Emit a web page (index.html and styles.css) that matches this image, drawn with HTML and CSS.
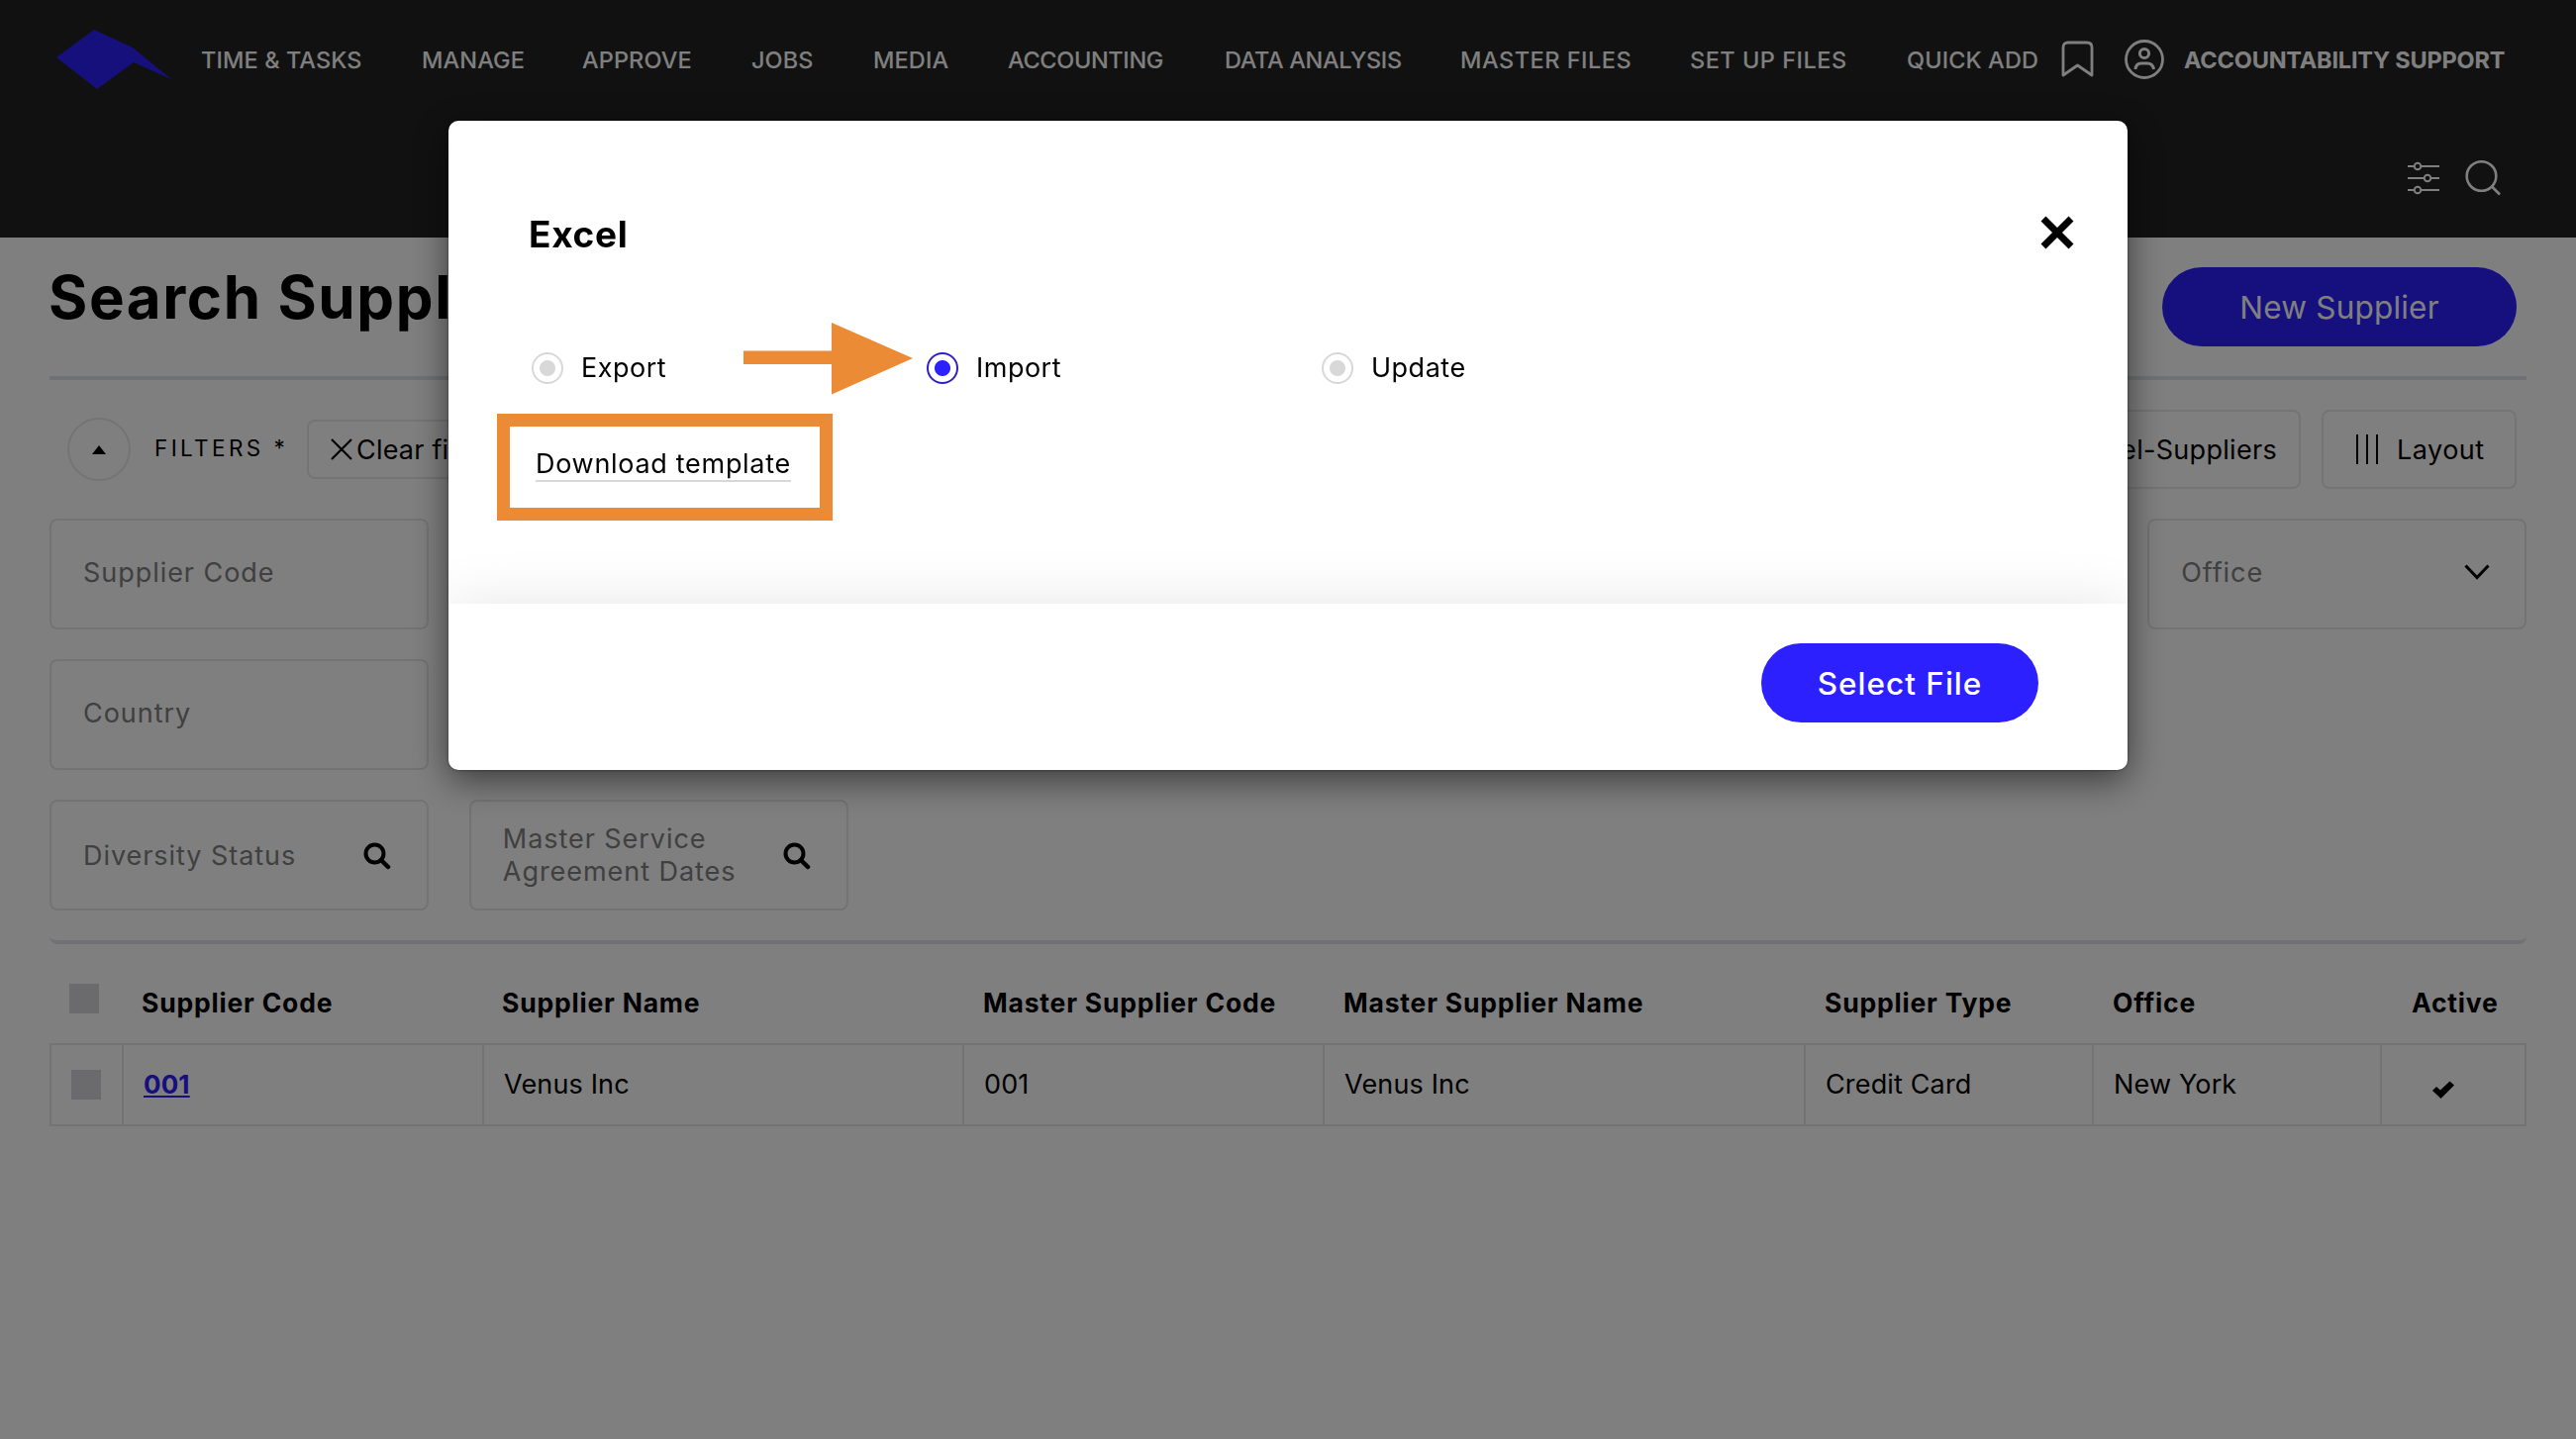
FILE: index.html
```html
<!DOCTYPE html>
<html lang="en">
<head>
    <meta charset="UTF-8" />
    <meta name="viewport" content="width=device-width, initial-scale=1.0"/>
    <title>Search Suppliers</title>
    <link rel="stylesheet" href="styles.css">
</head>
<body>
    <header class="header">
        <div class="topbar">
            <svg class="logo" width="118" height="64" viewBox="0 0 118 64">
                <path d="M0 30 L38 2 L77 20 L116 52 L78 35 L41 62 Z" fill="#2d20fa"/>
            </svg>
            <nav class="nav">
                <a>TIME &amp; TASKS</a>
                <a>MANAGE</a>
                <a>APPROVE</a>
                <a>JOBS</a>
                <a>MEDIA</a>
                <a class="tight">ACCOUNTING</a>
                <a class="tight">DATA ANALYSIS</a>
                <a class="wide">MASTER FILES</a>
                <a class="wide">SET UP FILES</a>
                <a>QUICK ADD</a>
            </nav>
            <svg class="bookmark" width="34" height="40" viewBox="0 0 34 40">
                <path d="M2 36 V8 Q2 3 7 3 H26 Q31 3 31 8 V36 L16.5 26 Z" fill="none" stroke="#fff" stroke-width="2.8" stroke-linejoin="round"/>
            </svg>
            <svg class="user-icon" width="42" height="42" viewBox="0 0 42 42" fill="none" stroke="#fff">
                <circle cx="21" cy="21" r="18.5" stroke-width="2.8"/>
                <circle cx="21" cy="15" r="4.6" stroke-width="3"/>
                <path d="M12 31 Q12.5 25 18 25 H24 Q29.5 25 30.5 31" stroke-width="3"/>
            </svg>
            <span class="user-name">ACCOUNTABILITY SUPPORT</span>
        </div>
        <div class="subbar">
            <svg width="34" height="36" viewBox="0 0 34 36" fill="none" stroke="#fff" stroke-width="2">
                <path d="M1 6 H8 M14 6 H33 M1 18 H18 M24 18 H33 M1 30 H8 M14 30 H33"/>
                <circle cx="11" cy="6" r="3.3"/>
                <circle cx="21" cy="18" r="3.3"/>
                <circle cx="11" cy="30" r="3.3"/>
            </svg>
            <svg width="38" height="38" viewBox="0 0 38 38" fill="none" stroke="#fff" stroke-width="2.6">
                <circle cx="17.5" cy="17" r="14.8"/>
                <path d="M28 27.5 L36 35.5"/>
            </svg>
        </div>
    </header>

    <main class="page">
        <div class="page-head">
            <h1>Search Suppliers</h1>
            <button class="btn btn-new">New Supplier</button>
        </div>

        <div class="toolbar">
            <span class="collapse">
                <svg width="14" height="9" viewBox="0 0 14 9"><path d="M7 0 L14 9 H0 Z"/></svg>
            </span>
            <span class="filters-label">FILTERS *</span>
            <button class="tool clear">
                <svg width="22" height="22" viewBox="0 0 22 22"><path d="M1 1 L21 21 M21 1 L1 21" stroke="#000" stroke-width="2.2"/></svg>
                Clear filters
            </button>
            <button class="tool excel">Excel-Suppliers</button>
            <button class="tool layout">
                <svg width="24" height="30" viewBox="0 0 24 30"><path d="M2 0 V30 M12 0 V30 M22 0 V30" stroke="#000" stroke-width="2"/></svg>
                Layout
            </button>
        </div>

        <div class="filters">
            <div class="field">Supplier Code</div>
            <div class="field last-col">
                Office
                <svg width="26" height="16" viewBox="0 0 26 16"><path d="M1.5 1.5 L13 13.5 L24.5 1.5" fill="none" stroke="#000" stroke-width="3"/></svg>
            </div>
            <div class="field first-col">Country</div>
            <div class="field search-field first-col">
                Diversity Status
                <svg class="search" width="28" height="28" viewBox="0 0 28 28"><circle cx="11.5" cy="11.5" r="9" fill="none" stroke="#000" stroke-width="4"/><path d="M18 18 L25 25" stroke="#000" stroke-width="4.5" stroke-linecap="round"/></svg>
            </div>
            <div class="field search-field">
                Master Service<br>Agreement Dates
                <svg class="search" width="28" height="28" viewBox="0 0 28 28"><circle cx="11.5" cy="11.5" r="9" fill="none" stroke="#000" stroke-width="4"/><path d="M18 18 L25 25" stroke="#000" stroke-width="4.5" stroke-linecap="round"/></svg>
            </div>
        </div>

        <div class="grid grid-head">
            <div><span class="check"></span></div>
            <div>Supplier Code</div>
            <div>Supplier Name</div>
            <div>Master Supplier Code</div>
            <div>Master Supplier Name</div>
            <div>Supplier Type</div>
            <div>Office</div>
            <div class="active">Active</div>
        </div>
        <div class="grid grid-row">
            <div><span class="check"></span></div>
            <div><a class="code">001</a></div>
            <div>Venus Inc</div>
            <div>001</div>
            <div>Venus Inc</div>
            <div>Credit Card</div>
            <div>New York</div>
            <div class="active">
                <svg width="22" height="18" viewBox="0 0 22 18"><path d="M0 10 L4 6 L8 9.5 L17.5 0.5 L22 4.5 L8.5 18 Z"/></svg>
            </div>
        </div>
    </main>

    <div class="overlay">
        <div class="modal">
            <div class="modal-body">
                <div class="modal-head">
                    <h2>Excel</h2>
                    <svg width="36" height="36" viewBox="0 0 36 36"><path d="M4 4 L32 32 M32 4 L4 32" stroke="#000" stroke-width="7"/></svg>
                </div>
                <div class="options">
                    <label><span class="radio"></span>Export</label>
                    <label><span class="radio checked"></span>Import</label>
                    <label><span class="radio"></span>Update</label>
                </div>
                <div class="highlight"><a class="download">Download template</a></div>
                <svg class="arrow" width="172" height="74" viewBox="0 0 172 74">
                    <path d="M0 28.5 H89 V0 L171 36 L89 72.5 V42 H0 Z" fill="#ec8b35"/>
                </svg>
            </div>
            <div class="modal-foot">
                <button class="btn btn-select">Select File</button>
            </div>
        </div>
    </div>
</body>
</html>
```
FILE: styles.css
```css
* {
    box-sizing: border-box;
}
body {
    margin: 0;
    height: 1454px;
    overflow: hidden;
    background-color: #fff;
    color: #000;
    font-family: Inter, "Liberation Sans", sans-serif;
    font-size: 27px;
    letter-spacing: 0.75px;
}
svg {
    display: block;
    flex: none;
}
button {
    font: inherit;
    letter-spacing: inherit;
    color: #000;
    padding: 0;
}

/* header */
.header {
    height: 240px;
    background-color: #222;
    color: #fff;
}
.topbar {
    display: flex;
    align-items: center;
    height: 120px;
    padding-left: 57px;
    font-size: 23.5px;
    letter-spacing: 0.1px;
    white-space: nowrap;
}
.logo {
    margin-right: 28px;
}
.nav {
    display: grid;
    grid-template-columns: 223px 162px 171px 123px 136px 219px 238px 232px 219px 156px;
    font-weight: 500;
}
.nav .tight {
    letter-spacing: -0.35px;
}
.nav .wide {
    letter-spacing: 0.5px;
}
.bookmark {
    margin-right: 29px;
}
.user-icon {
    margin-right: 19px;
}
.user-name {
    font-weight: 700;
    letter-spacing: -0.2px;
}
.subbar {
    display: flex;
    justify-content: flex-end;
    align-items: center;
    gap: 24px;
    height: 120px;
    padding-right: 75px;
}

/* page */
.page {
    padding: 0 50px;
}
.page-head {
    display: flex;
    justify-content: space-between;
    height: 144px;
    padding: 30px 10px 0 0;
    border-bottom: 4px solid #dfe3e8;
}
h1 {
    margin: -1px 0 0 -1px;
    font-size: 60px;
    font-weight: 700;
    line-height: 62px;
    letter-spacing: 1.6px;
}
.btn {
    height: 80px;
    border: none;
    border-radius: 40px;
    background-color: #2d20ff;
    color: #fff;
    font-size: 31.5px;
    letter-spacing: 0.2px;
}
.btn-new {
    width: 358px;
}
.toolbar {
    display: flex;
    align-items: center;
    height: 140px;
    padding: 0 10px 0 18px;
}
.collapse {
    display: flex;
    align-items: center;
    justify-content: center;
    width: 64px;
    height: 64px;
    border: 2px solid #e8e8ea;
    border-radius: 50%;
}
.filters-label {
    width: 153px;
    margin: -4px 0 0 24px;
    font-size: 22.5px;
    letter-spacing: 3.4px;
}
.tool {
    display: flex;
    align-items: center;
    height: 80px;
    border: 2px solid #e8e8ea;
    border-radius: 8px;
    background: none;
    white-space: nowrap;
}
.clear {
    height: 60px;
    width: 230px;
    gap: 4px;
    padding-left: 22px;
    margin-left: 1px;
    letter-spacing: 0.2px;
}
.excel {
    width: 300px;
    margin-left: auto;
    padding-right: 22px;
    justify-content: flex-end;
    letter-spacing: 0.3px;
}
.layout {
    width: 197px;
    margin-left: 21px;
    padding-left: 32px;
    gap: 18px;
    letter-spacing: 0.5px;
}
.filters {
    display: grid;
    grid-template-columns: repeat(6, 1fr);
    gap: 30px 41px;
    height: 430px;
    border-bottom: 4px solid #dfe3e8;
    border-radius: 8px;
    align-content: start;
}
.field {
    position: relative;
    display: flex;
    align-items: center;
    height: 112px;
    padding: 0 35px 4px 32px;
    border: 2px solid #e6e6e8;
    border-radius: 8px;
    color: #808080;
    letter-spacing: 0.95px;
    line-height: 33px;
}
.field svg {
    margin-left: auto;
}
.search-field {
    padding-bottom: 0;
}
.field svg.search {
    position: absolute;
    right: 36px;
    top: 41px;
}
.first-col {
    grid-column: 1;
}
.last-col {
    grid-column: 6;
}

/* results */
.grid {
    display: grid;
    grid-template-columns: 73px 364px 486px 364px 486px 291px 291px 147px;
}
.grid > div {
    display: flex;
    align-items: center;
    padding-left: 20px;
}
.grid > div:first-child {
    padding-left: 19px;
}
.grid-head {
    height: 100px;
    padding-top: 18px;
    font-size: 26.5px;
    font-weight: 700;
    letter-spacing: 0.8px;
}
.grid-row {
    grid-template-columns: 71px 364px 485px 364px 486px 291px 291px 146px;
    height: 84px;
    border: 2px solid #e6e6e8;
    letter-spacing: 0.15px;
}
.grid-row > div {
    padding-bottom: 1px;
}
.grid-row > div + div {
    border-left: 2px solid #e6e6e8;
}
.grid-head .check {
    margin: -9px 0 0 1px;
}
.grid .active {
    padding-left: 51px;
}
.grid-head .active {
    padding-left: 31px;
}
.grid-row .active svg {
    margin-top: 11px;
}
.grid-row .check {
    margin-left: 1px;
}
.check {
    width: 30px;
    height: 30px;
    background-color: #d7d7da;
}
.code {
    color: #2d20ff;
    font-size: 26px;
    font-weight: 700;
    text-decoration: underline;
}

/* modal */
.overlay {
    position: fixed;
    inset: 0;
    background-color: rgba(0, 0, 0, 0.5);
}
.modal {
    width: 1696px;
    height: 656px;
    margin: 122px 0 0 453px;
    border-radius: 10px;
    background-color: #fff;
    box-shadow: 0 10px 36px rgba(0, 0, 0, 0.55), 0 0 3px rgba(0, 0, 0, 0.5);
}
.modal-body {
    position: relative;
    height: 488px;
    padding: 93px 53px 0 81px;
    overflow: hidden;
}
/* soft edge above the footer */
.modal-body::after {
    content: "";
    position: absolute;
    left: 0;
    right: 0;
    top: 488px;
    height: 168px;
    box-shadow: 0 0 60px rgba(0, 0, 0, 0.1);
}
.modal-head {
    display: flex;
    justify-content: space-between;
    align-items: center;
    height: 40px;
}
h2 {
    margin: 3px 0 0;
    font-size: 37px;
    font-weight: 700;
    letter-spacing: 0.7px;
}
.options {
    display: grid;
    grid-template-columns: repeat(3, 399px);
    margin: 101px 0 0 3px;
}
.options label {
    display: flex;
    align-items: center;
    gap: 18px;
    height: 32px;
    letter-spacing: 0.5px;
    line-height: 30px;
}
.radio {
    width: 32px;
    height: 32px;
    border: 2px solid #d8d8d8;
    border-radius: 50%;
    background: radial-gradient(circle, #d8d8d8 7.5px, transparent 8.5px);
}
.radio.checked {
    border-color: #2d20c8;
    background: radial-gradient(circle, #2d20ff 7.5px, transparent 8.5px);
}
.highlight {
    width: 339px;
    height: 108px;
    margin: 30px 0 0 -32px;
    padding: 20px 0 0 26px;
    border: 13px solid #ec8b35;
}
.download {
    display: block;
    width: 258px;
    height: 36px;
    border-bottom: 2px solid #d8d8d8;
    letter-spacing: 0.7px;
    line-height: 36px;
    white-space: nowrap;
}
.arrow {
    position: absolute;
    left: 298px;
    top: 204px;
}
.modal-foot {
    display: flex;
    justify-content: flex-end;
    padding: 40px 90px 0 0;
}
.btn-select {
    width: 280px;
    font-weight: 500;
    letter-spacing: 1px;
}
```
